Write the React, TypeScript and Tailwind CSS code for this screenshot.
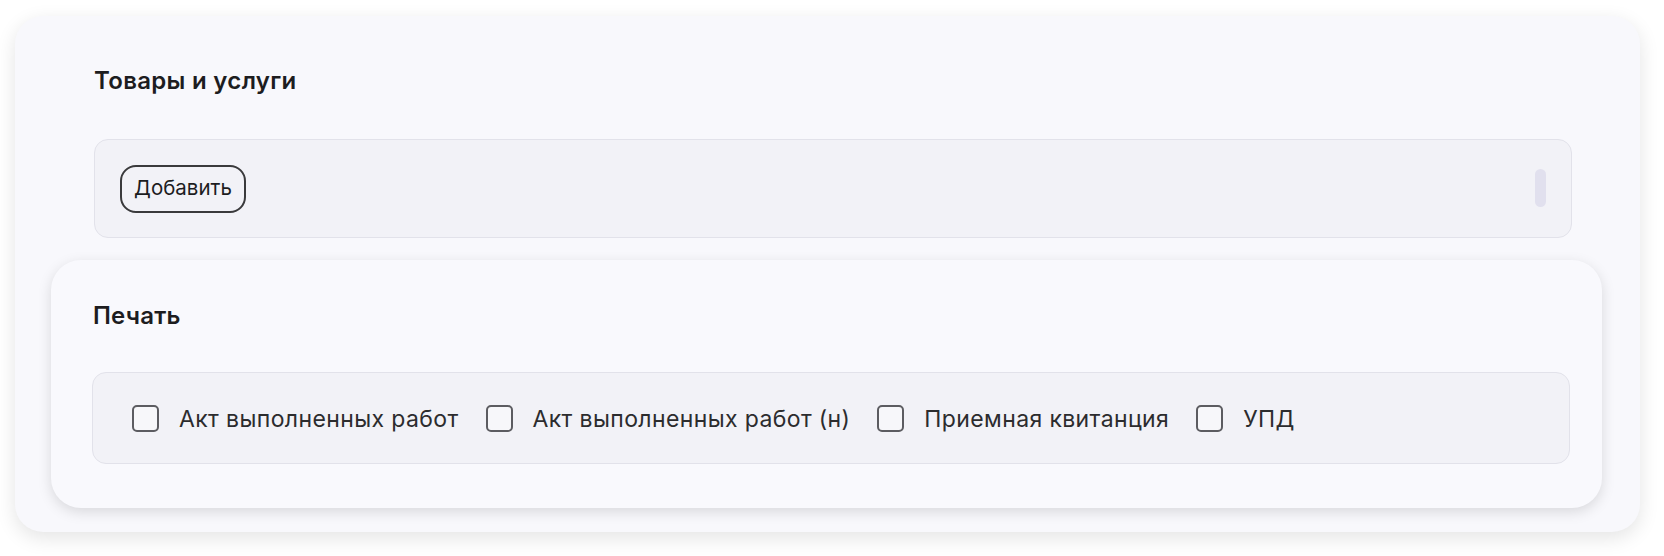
import React from "react";

const labels = [
  "Акт выполненных работ",
  "Акт выполненных работ (н)",
  "Приемная квитанция",
  "УПД",
];

export default function App() {
  return (
    <div
      className="w-[1664px] h-[556px] bg-white pt-[16px] pl-[15px]"
      style={{ fontFamily: "Inter, 'Noto Sans', sans-serif" }}
    >
      <div className="w-[1625px] h-[516px] rounded-[28px] bg-[#f8f8fc] shadow-[0_6px_20px_rgba(0,0,0,0.11)] pt-[49px] flex flex-col">
        <div className="pl-[79px] text-[24px] leading-[32px] font-semibold text-[#1d1d1f] tracking-[0.3px]">
          Товары и услуги
        </div>
        <div className="relative ml-[79px] mt-[42px] w-[1478px] h-[99px] rounded-[14px] bg-[#f2f2f7] border border-[#e2e2ea] flex items-center pl-[25px]">
          <button className="w-[126px] h-[48px] rounded-[16px] border-[2px] border-[#3a3a3c] text-[20.5px] text-[#1d1d1f] flex items-center justify-center">
            Добавить
          </button>
          <div className="absolute right-[25px] top-[29px] w-[11px] h-[38px] rounded-full bg-[#e1e0ee]" />
        </div>
        <div className="ml-[36px] mt-[22px] w-[1551px] h-[248px] rounded-[30px] bg-[#f9f9fd] shadow-[0_4px_14px_rgba(0,0,0,0.13)] pt-[40px] flex flex-col">
          <div className="pl-[42px] text-[24px] leading-[32px] font-semibold text-[#1d1d1f] tracking-[0.2px]">
            Печать
          </div>
          <div className="ml-[41px] mt-[40px] w-[1478px] h-[92px] rounded-[14px] bg-[#f2f2f7] border border-[#e2e2ea] flex items-center pl-[39px] gap-[27px]">
            {labels.map((l) => (
              <label key={l} className="flex items-center gap-[20px]">
                <span className="w-[27px] h-[27px] rounded-[5px] border-[2.5px] border-[#5c5c61] bg-[#f7f7fa]" />
                <span className="text-[23px] leading-[30px] text-[#2c2c2e] tracking-[0.38px] pt-[1px]">{l}</span>
              </label>
            ))}
          </div>
        </div>
      </div>
    </div>
  );
}
